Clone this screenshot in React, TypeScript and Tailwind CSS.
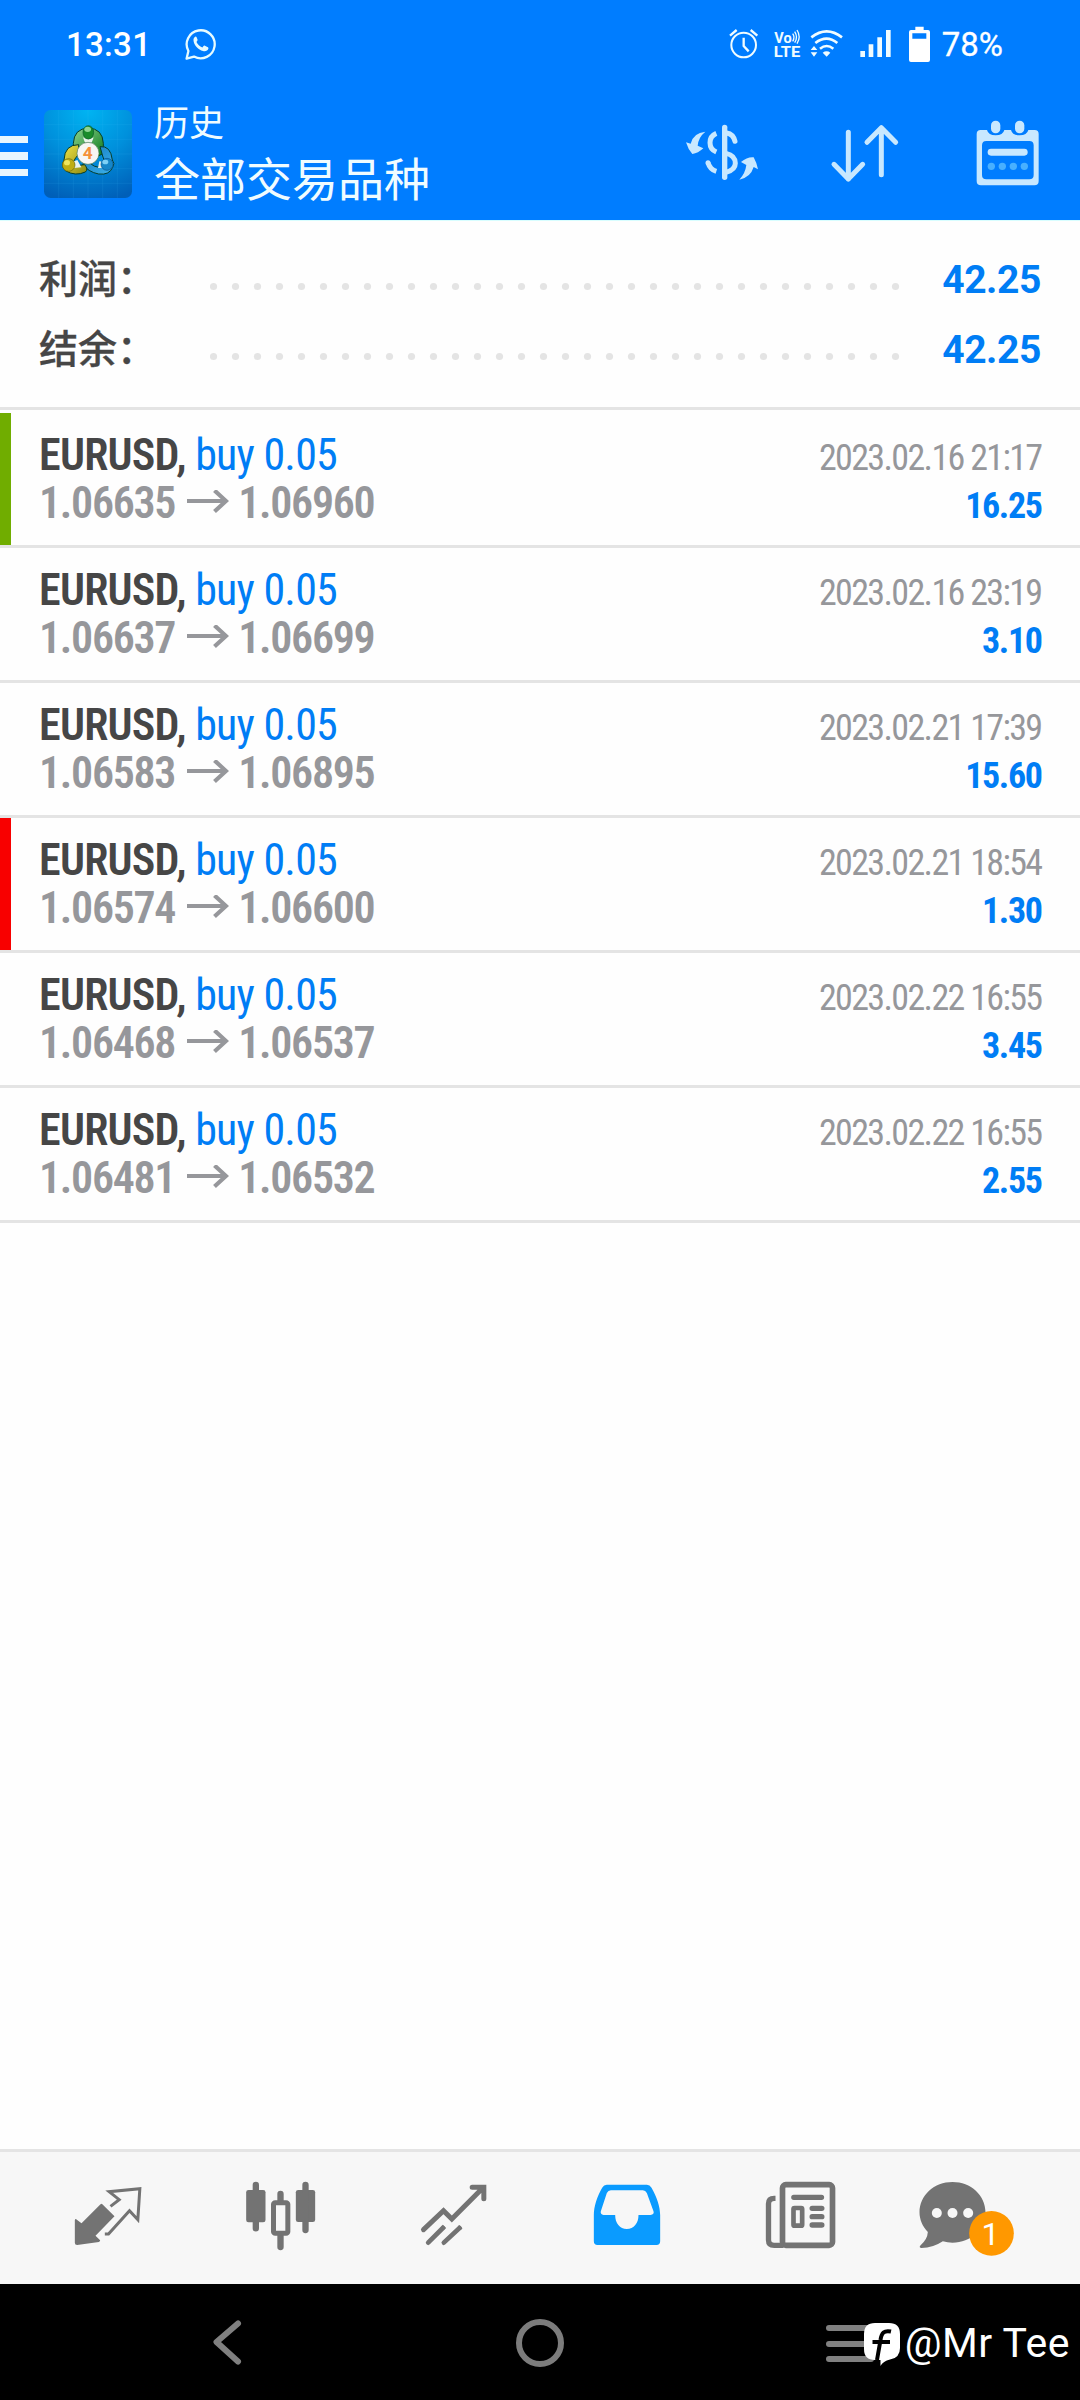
import React from "react";

interface Deal {
  symbol: string;
  side: string;
  open: string;
  close: string;
  time: string;
  profit: string;
  marker?: "tp" | "sl";
}

const DEALS: Deal[] = [
  { symbol: "EURUSD", side: "buy 0.05", open: "1.06635", close: "1.06960", time: "2023.02.16 21:17", profit: "16.25", marker: "tp" },
  { symbol: "EURUSD", side: "buy 0.05", open: "1.06637", close: "1.06699", time: "2023.02.16 23:19", profit: "3.10" },
  { symbol: "EURUSD", side: "buy 0.05", open: "1.06583", close: "1.06895", time: "2023.02.21 17:39", profit: "15.60" },
  { symbol: "EURUSD", side: "buy 0.05", open: "1.06574", close: "1.06600", time: "2023.02.21 18:54", profit: "1.30", marker: "sl" },
  { symbol: "EURUSD", side: "buy 0.05", open: "1.06468", close: "1.06537", time: "2023.02.22 16:55", profit: "3.45" },
  { symbol: "EURUSD", side: "buy 0.05", open: "1.06481", close: "1.06532", time: "2023.02.22 16:55", profit: "2.55" },
];

const SUMMARY = [
  { label: "利润：", value: "42.25" },
  { label: "结余：", value: "42.25" },
];

const DOTS = Array.from({ length: 32 }, (_, i) => i);

function StatusBar() {
  return (
    <div className="flex h-[88px] items-center pl-[66px] pr-[77px] text-white">
      <span className="w-[119px] text-[33px] font-medium leading-none tracking-[0.3px]">13:31</span>

      {/* WhatsApp */}
      <svg className="h-8 w-8" viewBox="0 0 32 32" fill="none">
        <path d="M3.4 23 A14 14 0 1 1 9 28.6 L1.6 30.6 Z" stroke="#e6fbff" strokeWidth="2.3" strokeLinejoin="round" />
        <path
          d="M10.6 8.6c-1.6.7-2.5 2.5-2 4.6.9 4.6 4.6 8.4 9.4 9.9 2.4.7 4.9-.3 5.4-2.5.2-.9-.1-1.2-1-1.7l-2.5-1.2c-.6-.3-1-.2-1.4.4l-1.1 1.3c-2.8-1-4.7-2.9-5.9-5.4l.9-1.4c.3-.4.3-.8.1-1.2l-1-2.3c-.2-.4-.5-.6-.9-.5z"
          fill="#e6fbff"
        />
      </svg>

      {/* Alarm, VoLTE, wifi, signal, battery */}
      <svg className="ml-auto mt-0.5 h-[50px] w-[220px]" viewBox="0 0 660 150" fill="none" stroke="#f0fcff">
        <circle cx="71" cy="75" r="37" strokeWidth="6" />
        <path d="M71 53V78L86 94" strokeWidth="7" strokeLinejoin="round" />
        <path d="M30 47L50 30M92 30L112 47" strokeWidth="7" />

        <text x="163" y="68" fill="#f0fcff" stroke="none" className="font-['Roboto'] text-[42px] font-bold" textLength="52" lengthAdjust="spacingAndGlyphs">
          Vo
        </text>
        <path d="M218 41Q226 52 218 64M224 35Q235 52 224 68M231 30Q244 50 231 71" strokeWidth="4" />
        <text x="161" y="111" fill="#f0fcff" stroke="none" className="font-['Roboto'] text-[46px] font-bold" textLength="80" lengthAdjust="spacingAndGlyphs">
          LTE
        </text>

        <path d="M274 52Q320 16 366 52M286 69Q320 43 352 69M300 86Q320 70 340 86" strokeWidth="8" />
        <path d="M308 98Q320 90 331 98L320 110ZM272 90H292L282 78ZM272 97H292L282 110Z" fill="#f0fcff" stroke="none" />

        <path d="M421 93h14v18h-14zM446 73h14v38h-14zM472 52h14v59h-14zM498 30h14v81h-14z" fill="#f0fcff" stroke="none" />

        <path
          fillRule="evenodd"
          d="M586 20h25v10h13q6 0 6 6v84q0 6-6 6h-51q-6 0-6-6V36q0-6 6-6h13zM577 40v16h42V40z"
          fill="#ffffff"
          stroke="none"
        />
      </svg>
      <span className="ml-0.5 text-[33px] leading-none [-webkit-text-stroke:0.3px]">78%</span>
    </div>
  );
}

function AppLogo() {
  return (
    <svg className="h-[88px] w-[88px]" viewBox="0 0 264 264">
      <defs>
        <radialGradient id="bg" cx="0.5" cy="0" r="1.05">
          <stop offset="0" stopColor="#00b4f2" />
          <stop offset="0.5" stopColor="#0090dc" />
          <stop offset="1" stopColor="#005fb8" />
        </radialGradient>
        <linearGradient id="green" x1="0" y1="0" x2="1" y2="1">
          <stop offset="0" stopColor="#8ed490" />
          <stop offset="1" stopColor="#0d7a1c" />
        </linearGradient>
        <linearGradient id="yellow" x1="0" y1="0" x2="1" y2="1">
          <stop offset="0" stopColor="#f1e445" />
          <stop offset="1" stopColor="#8d8a12" />
        </linearGradient>
        <linearGradient id="blue" x1="0" y1="0" x2="1" y2="1">
          <stop offset="0" stopColor="#0f76bd" />
          <stop offset="1" stopColor="#3fb4ec" />
        </linearGradient>
      </defs>
      <rect width="264" height="264" rx="20" fill="url(#bg)" />
      <path d="M44 0V264M88 0V264M132 0V264M176 0V264M220 0V264M0 44H264M0 88H264M0 132H264M0 176H264M0 220H264" stroke="#4cc3ff" strokeOpacity="0.16" strokeWidth="2" />

      {/* three linked rings */}
      <g stroke="#063d2a" strokeWidth="3">
        <path d="M88 130V100Q90 56 133 54Q176 56 178 100V130L160 140L145 100L133 92L120 100L104 136Z" fill="url(#green)" />
        <path d="M168 110Q200 106 205 150Q214 160 206 172Q196 196 164 192Q132 186 116 162L132 152Q150 176 172 170Q186 160 176 138Z" fill="url(#blue)" />
        <path d="M104 104Q62 104 60 150Q50 168 64 182Q94 200 124 186Q134 178 122 164L92 168Q84 150 104 134Z" fill="url(#yellow)" />
      </g>
      <path d="M117 82q16 12 32 0l-6 16h-20zM84 156l16-6 12 22-22 2zM162 174l4-20 16 2-4 18z" fill="#eaf4ee" />
      <ellipse cx="133" cy="67" rx="16" ry="20" fill="#1a8c2b" stroke="#0a5b2c" strokeWidth="2" />
      <ellipse cx="131" cy="58" rx="10" ry="8" fill="#8fd493" />
      <circle cx="74" cy="165" r="19" fill="#bfae12" stroke="#6b6710" strokeWidth="2" />
      <ellipse cx="69" cy="158" rx="9" ry="8" fill="#f0e65c" />
      <circle cx="189" cy="163" r="18" fill="#1686c8" stroke="#04508e" strokeWidth="2" />
      <ellipse cx="184" cy="156" rx="9" ry="7" fill="#7dd0f5" />
      <circle cx="132" cy="130" r="33" fill="#f8f6f4" stroke="#4c7a52" strokeWidth="2" />
      <text x="131" y="148" textAnchor="middle" fill="#f5913a" className="font-['Roboto'] text-[52px] font-bold">
        4
      </text>
    </svg>
  );
}

function Toolbar() {
  return (
    <div className="flex h-[132px] items-center pr-10">
      <div className="mt-1 flex w-7 flex-col gap-[9px]">
        <span className="h-[7.5px] bg-[#e8f6ff]" />
        <span className="h-[7.5px] bg-[#e8f6ff]" />
        <span className="h-[7.5px] bg-[#e8f6ff]" />
      </div>
      <div className="ml-4">
        <AppLogo />
      </div>
      <div className="mb-1.5 ml-[22px] flex flex-col gap-px font-['Noto_Sans_CJK_SC'] text-[#f0fcff]">
        <span className="text-[35px] leading-[48px]">历史</span>
        <span className="text-[46px] leading-[60px]">全部交易品种</span>
      </div>

      <svg className="ml-auto h-[68px] w-[76px]" viewBox="12 30 228 204" fill="none" stroke="#c8e8ff">
        <path d="M134 52V202" strokeWidth="16" strokeLinecap="round" />
        <path d="M109 70Q90 78 90 98Q90 118 109 126M84 158Q90 178 109 184" strokeWidth="15" />
        <path d="M84 158v.1" strokeWidth="15" strokeLinecap="round" />
        <path d="M140 69Q160 72 165 94" strokeWidth="15" strokeLinecap="round" />
        <path d="M138 130Q166 136 166 160Q166 180 138 187" strokeWidth="15" />
        <path d="M76 65Q40 68 32 101L18 97Q24 118 37 132Q54 130 70 115L53 107Q55 82 76 65Z" fill="#c8e8ff" stroke="none" />
        <path d="M178 209Q212 202 221 171L234 178Q230 158 221 142Q202 140 183 156L199 165Q196 190 178 209Z" fill="#c8e8ff" stroke="none" />
      </svg>

      <svg className="ml-[70px] h-[68px] w-[70px]" viewBox="450 30 210 204" fill="none" stroke="#c8e8ff" strokeWidth="15" strokeLinecap="round" strokeLinejoin="round">
        <path d="M505 67V207M462 163L505 207L548 163" />
        <path d="M604 194V53M561 97L604 53L647 97" />
      </svg>

      <svg className="ml-[75px] h-[68px] w-[65px]" viewBox="886 30 195 204">
        <path
          fillRule="evenodd"
          d="M903 60H922Q926 76 948 76Q970 76 974 60H994Q998 76 1020 76Q1042 76 1046 60H1065Q1077 60 1077 72V213Q1077 226 1064 226H904Q891 226 891 213V72Q891 60 903 60ZM920 93Q907 93 907 106V195Q907 208 920 208H1049Q1062 208 1062 195V106Q1062 93 1049 93Z"
          fill="#c8e8ff"
        />
        <rect x="934" y="32" width="28" height="38" rx="14" fill="#c8e8ff" />
        <rect x="1006" y="32" width="28" height="38" rx="14" fill="#c8e8ff" />
        <rect x="924" y="116" width="120" height="21" rx="10" fill="#c8e8ff" />
        <g fill="#48b0ff">
          <circle cx="935" cy="169" r="11" />
          <circle cx="968" cy="169" r="11" />
          <circle cx="1001" cy="169" r="11" />
          <circle cx="1034" cy="169" r="11" />
        </g>
      </svg>
    </div>
  );
}

function SummaryRow({ label, value }: { label: string; value: string }) {
  return (
    <div className="flex h-[70px] items-center">
      <span className="w-[171px] pb-2 font-['Noto_Sans_CJK_SC'] text-[39px] font-medium leading-[62px] text-[#464646] [-webkit-text-stroke:0.3px]">
        {label}
      </span>
      <svg className="h-[70px] w-[690px]" viewBox="0 0 690 70" fill="#e4e4e4">
        {DOTS.map((i) => (
          <circle key={i} cx={3.5 + i * 22} cy="41.5" r="3.6" />
        ))}
      </svg>
      <span className="ml-auto text-[39px] font-bold leading-[70px] tracking-[-0.4px] text-[#007df5]">{value}</span>
    </div>
  );
}

function DealRow({ deal }: { deal: Deal }) {
  return (
    <div className="flex h-[135px] border-b-[3px] border-[#e4e4e4] pr-[38.5px] font-['Roboto_Condensed']">
      <div className={`h-full w-[11px] ${deal.marker === "tp" ? "bg-[#70ad00]" : deal.marker === "sl" ? "bg-[#f80000]" : ""}`} />
      <div className="ml-7 pt-[18px] text-[44px] leading-[48px]">
        <div className="whitespace-pre font-semibold tracking-[-0.75px] text-[#464646]">
          {deal.symbol}, <span className="font-normal tracking-[-0.8px] text-[#007df5]">{deal.side}</span>
        </div>
        <div className="flex items-center font-semibold tracking-[-1.3px] text-[#96979b]">
          <span>{deal.open}</span>
          <svg className="ml-3 mr-[9px] h-[26px] w-[42px]" viewBox="0 0 42 26" fill="none" stroke="currentColor" strokeWidth="4.2">
            <path d="M0 11H39M27.5 0.5L39 11L27.5 21.5" />
          </svg>
          <span>{deal.close}</span>
        </div>
      </div>
      <div className="ml-auto pt-[21px] text-right text-[36px] leading-[48px]">
        <div className="tracking-[-1.65px] text-[#96979b]">{deal.time}</div>
        <div className="font-bold tracking-[-1.4px] text-[#007df5]">{deal.profit}</div>
      </div>
    </div>
  );
}

function NavItem({ viewBox, children }: { viewBox: string; children: React.ReactNode }) {
  return (
    <button type="button" className="flex flex-1 items-center justify-center pb-1.5">
      <svg className="h-[90px] w-[90px] overflow-visible" viewBox={viewBox} fill="#737373">
        {children}
      </svg>
    </button>
  );
}

function BottomNav() {
  return (
    <nav className="flex h-[135px] border-t-[3px] border-[#e4e4e4] bg-[#f7f7f7] pl-[20.5px] pr-[21.5px]">
      {/* Quotes */}
      <NavItem viewBox="7.5 0 270 270">
        <path d="M127 101L165 139L108 197L122 211Q122 215 118 216L53 225Q46 225 46 218V150Q48 145 52 149L66 160L123 103Z" />
        <path d="M153 109L179 89L149 65L241 56L235 149L210 122L147 192H136" fill="none" stroke="#737373" strokeWidth="9" />
      </NavItem>

      {/* Charts */}
      <NavItem viewBox="526.5 0 270 270">
        <rect x="560" y="60" width="58" height="97" rx="7" />
        <rect x="709" y="60" width="58" height="96" rx="7" />
        <path d="M589 45V175M738 45V180M663 72V95M663 197V231" stroke="#737373" strokeWidth="19" strokeLinecap="round" />
        <rect x="642" y="98" width="43" height="92" rx="5" fill="#f7f7f7" stroke="#737373" strokeWidth="15" />
      </NavItem>

      {/* Trade */}
      <NavItem viewBox="1045.5 0 270 270">
        <g fill="none" stroke="#737373" strokeWidth="14" strokeLinecap="round">
          <path d="M1092 179L1152 122L1177 147L1272 52M1238 52H1273V86" strokeWidth="15" />
          <path d="M1106 218L1150 174M1153 218L1200 174" />
          <path d="M1150 174L1155 169M1200 174L1204 170" strokeLinecap="butt" />
        </g>
      </NavItem>

      {/* History */}
      <NavItem viewBox="4.5 0 270 270">
        <path
          fillRule="evenodd"
          fill="#0a9bff"
          d="M82 44H202Q211 44 216 53C232 80 242 110 242 135V214Q242 225 231 225H54Q43 225 43 214V135C43 110 52 80 68 53Q73 44 82 44ZM94 61Q86 61 82 69L64 124Q62 134 72 135H107C107 160 121 177 142 177C163 177 177 160 177 135H213Q225 134 222 124L202 69Q198 61 190 61Z"
        />
      </NavItem>

      {/* News */}
      <NavItem viewBox="523.5 0 270 270">
        <g fill="none" stroke="#737373">
          <rect x="609" y="44" width="150" height="182" rx="10" strokeWidth="17" />
          <path d="M588 85H584Q567 85 567 101V210Q567 226 584 226H612" strokeWidth="16" />
          <path d="M643 82H726M698 115H727M698 140H727M698 165H727" strokeWidth="16" strokeLinecap="round" />
          <rect x="642" y="114" width="26" height="53" rx="3" strokeWidth="14" />
        </g>
      </NavItem>

      {/* Messages */}
      <NavItem viewBox="1042.5 0 270 270">
        <path d="M1119 36C1174 36 1218 76 1218 127S1174 218 1119 218Q1104 218 1090 214Q1060 234 1026 234Q1018 232 1022 227Q1044 208 1045 186C1029 169 1020 149 1020 127C1020 76 1064 36 1119 36Z" />
        <g fill="#f7f7f7">
          <circle cx="1072" cy="129" r="15" />
          <circle cx="1119" cy="129" r="15" />
          <circle cx="1166" cy="129" r="15" />
        </g>
        <circle cx="1236" cy="190" r="67" fill="#ff9800" />
        <text x="1233" y="224" textAnchor="middle" fill="#ffffff" className="font-['Roboto'] text-[96px]">
          1
        </text>
      </NavItem>
    </nav>
  );
}

function SystemNav() {
  return (
    <div className="relative flex h-[116px] items-center bg-black pl-[211px]">
      <svg className="h-12 w-8" viewBox="0 0 32 48" fill="none" stroke="#808080" strokeWidth="6" strokeLinecap="round" strokeLinejoin="round">
        <path d="M27 5.5L5.5 24L27 43.5" />
      </svg>
      <span className="ml-[273px] mt-px h-12 w-12 rounded-full border-[6px] border-[#7c7c7c]" />
      <span className="ml-[262px] mt-[3px] flex w-12 flex-col gap-[9.5px]">
        <span className="h-1.5 rounded-full bg-[#808080]" />
        <span className="h-1.5 rounded-full bg-[#808080]" />
        <span className="h-1.5 rounded-full bg-[#808080]" />
      </span>

      {/* Watermark */}
      <div className="absolute right-[10px] top-[35px] flex items-center">
        <svg className="h-[46px] w-[38px]" viewBox="0 0 38 46">
          <path d="M12 3H26Q37 3 37 14V28Q37 38 27 39.5Q20 41 17.5 46V40H12Q1 40 1 29V14Q1 3 12 3Z" fill="#ffffff" />
          <path d="M28 11.5C21 10 18.5 13 17.5 20L14 40M9.5 22H27" fill="none" stroke="#000000" strokeWidth="4" />
        </svg>
        <span className="ml-1 text-[41px] leading-[48px] tracking-[0.5px] text-white">@Mr Tee</span>
      </div>
    </div>
  );
}

export default function App() {
  return (
    <div className="flex h-[2400px] w-[1080px] flex-col overflow-hidden bg-[#fefefe] font-['Roboto','Noto_Sans_CJK_SC',sans-serif]">
      <header className="border-b border-[#d8feff] bg-[#007dff]">
        <StatusBar />
        <Toolbar />
      </header>

      <section className="h-[189px] border-b-[3px] border-[#e4e4e4] pl-[39px] pr-[39px] pt-6">
        {SUMMARY.map((row) => (
          <SummaryRow key={row.label} label={row.label} value={row.value} />
        ))}
      </section>

      <main className="flex-1 pt-[3px]">
        {DEALS.map((deal) => (
          <DealRow key={deal.open} deal={deal} />
        ))}
      </main>

      <BottomNav />
      <SystemNav />
    </div>
  );
}
